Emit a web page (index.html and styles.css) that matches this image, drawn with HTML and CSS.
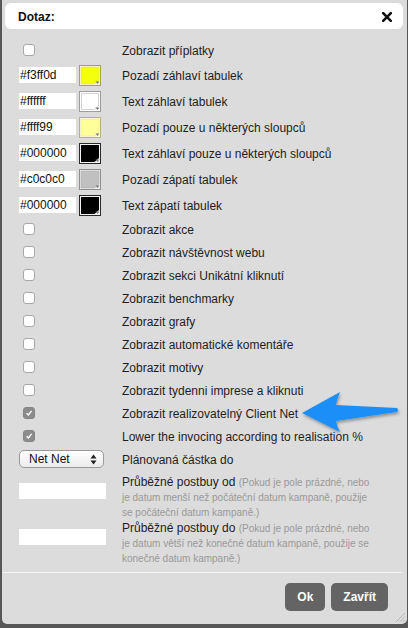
FILE: index.html
```html
<!DOCTYPE html>
<html lang="cs">
<head>
<meta charset="utf-8">
<title>Dotaz</title>
<link rel="stylesheet" href="styles.css">
</head>
<body>
<div class="dialog">
  <div class="header">
    <span class="title">Dotaz:</span>
    <svg class="close" width="10" height="10" viewBox="0 0 10 10"><path d="M1.2 1.2L8.8 8.8M8.8 1.2L1.2 8.8" stroke="#111" stroke-width="2.6" stroke-linecap="square"/></svg>
  </div>
  <div class="content">
    <div class="row chk"><div class="ctl"><span class="cb"></span></div><div class="lbl">Zobrazit příplatky</div></div>

    <div class="row color"><div class="ctl"><span class="hex">#f3ff0d</span>
      <svg class="sw" width="22" height="21" viewBox="0 0 22 21"><rect x="0.5" y="0.5" width="21" height="20" fill="#fbfbe0" stroke="#a9a63a"/><path d="M2 2H20V15L15.5 19H2Z" fill="#f3ff0d" stroke="#dede4a" stroke-width="0.6"/><path d="M16.5 16.5h4l-2 2.5z" fill="#7a7a7a"/></svg>
    </div><div class="lbl">Pozadí záhlaví tabulek</div></div>

    <div class="row color"><div class="ctl"><span class="hex">#ffffff</span>
      <svg class="sw" width="22" height="21" viewBox="0 0 22 21"><rect x="0.5" y="0.5" width="21" height="20" fill="#fff" stroke="#9d9d9d"/><path d="M2.5 2.5H19.5V15L15.5 18.5H2.5Z" fill="#ffffff" stroke="#c8c8c8" stroke-width="0.8"/><path d="M16.5 16.5h4l-2 2.5z" fill="#7a7a7a"/></svg>
    </div><div class="lbl">Text záhlaví tabulek</div></div>

    <div class="row color"><div class="ctl"><span class="hex">#ffff99</span>
      <svg class="sw" width="22" height="21" viewBox="0 0 22 21"><rect x="0.5" y="0.5" width="21" height="20" fill="#fdfde8" stroke="#b7b27a"/><path d="M2 2H20V15L15.5 19H2Z" fill="#ffff99" stroke="#e2df96" stroke-width="0.6"/><path d="M16.5 16.5h4l-2 2.5z" fill="#7a7a7a"/></svg>
    </div><div class="lbl">Pozadí pouze u některých sloupců</div></div>

    <div class="row color"><div class="ctl"><span class="hex">#000000</span>
      <svg class="sw" width="22" height="21" viewBox="0 0 22 21"><rect x="0.5" y="0.5" width="21" height="20" fill="#f4f4f4" stroke="#2a2a2a"/><path d="M2 2H20V15L15.5 19H2Z" fill="#000000"/><path d="M16.5 16.5h4l-2 2.5z" fill="#7a7a7a"/></svg>
    </div><div class="lbl">Text záhlaví pouze u některých sloupců</div></div>

    <div class="row color"><div class="ctl"><span class="hex">#c0c0c0</span>
      <svg class="sw" width="22" height="21" viewBox="0 0 22 21"><rect x="0.5" y="0.5" width="21" height="20" fill="#eeeeee" stroke="#8f8f8f"/><path d="M2 2H20V15L15.5 19H2Z" fill="#c0c0c0" stroke="#b0b0b0" stroke-width="0.6"/><path d="M16.5 16.5h4l-2 2.5z" fill="#7a7a7a"/></svg>
    </div><div class="lbl">Pozadí zápatí tabulek</div></div>

    <div class="row color"><div class="ctl"><span class="hex">#000000</span>
      <svg class="sw" width="22" height="21" viewBox="0 0 22 21"><rect x="0.5" y="0.5" width="21" height="20" fill="#f4f4f4" stroke="#2a2a2a"/><path d="M2 2H20V15L15.5 19H2Z" fill="#000000"/><path d="M16.5 16.5h4l-2 2.5z" fill="#7a7a7a"/></svg>
    </div><div class="lbl">Text zápatí tabulek</div></div>

    <div class="row chk"><div class="ctl"><span class="cb"></span></div><div class="lbl">Zobrazit akce</div></div>
    <div class="row chk"><div class="ctl"><span class="cb"></span></div><div class="lbl">Zobrazit návštěvnost webu</div></div>
    <div class="row chk"><div class="ctl"><span class="cb"></span></div><div class="lbl">Zobrazit sekci Unikátní kliknutí</div></div>
    <div class="row chk"><div class="ctl"><span class="cb"></span></div><div class="lbl">Zobrazit benchmarky</div></div>
    <div class="row chk"><div class="ctl"><span class="cb"></span></div><div class="lbl">Zobrazit grafy</div></div>
    <div class="row chk"><div class="ctl"><span class="cb"></span></div><div class="lbl">Zobrazit automatické komentáře</div></div>
    <div class="row chk"><div class="ctl"><span class="cb"></span></div><div class="lbl">Zobrazit motivy</div></div>
    <div class="row chk"><div class="ctl"><span class="cb"></span></div><div class="lbl">Zobrazit tydenni imprese a kliknuti</div></div>
    <div class="row chk"><div class="ctl"><span class="cb on"><svg width="10" height="10" viewBox="0 0 10 10"><path d="M2.6 5.2L4.3 7L7.6 2.8" fill="none" stroke="#fff" stroke-width="1.3"/></svg></span></div><div class="lbl">Zobrazit realizovatelný Client Net</div></div>
    <div class="row chk"><div class="ctl"><span class="cb on"><svg width="10" height="10" viewBox="0 0 10 10"><path d="M2.6 5.2L4.3 7L7.6 2.8" fill="none" stroke="#fff" stroke-width="1.3"/></svg></span></div><div class="lbl">Lower the invocing according to realisation %</div></div>

    <div class="row chk"><div class="ctl"><div class="sel"><span>Net Net</span><svg width="7" height="11" viewBox="0 0 7 11"><path d="M0.5 4.5L3.5 0.5L6.5 4.5Z M0.5 6.5L3.5 10.5L6.5 6.5Z" fill="#222"/></svg></div></div><div class="lbl">Plánovaná částka do</div></div>

    <div class="row date"><div class="ctl"><span class="field"></span></div><div class="lbl">Průběžné postbuy od <span class="hint">(Pokud je pole prázdné, nebo je datum menší než počáteční datum kampaně, použije se počáteční datum kampaně.)</span></div></div>
    <div class="row date"><div class="ctl"><span class="field"></span></div><div class="lbl">Průběžné postbuy do <span class="hint">(Pokud je pole prázdné, nebo je datum větší než konečné datum kampaně, použije se konečné datum kampaně.)</span></div></div>
  </div>
  <div class="sep"></div>
  <div class="footer">
    <button class="btn">Ok</button>
    <button class="btn">Zavřít</button>
  </div>
  <svg class="arrow" width="108" height="56" viewBox="0 0 108 56">
    <defs><filter id="sh" x="-10%" y="-20%" width="130%" height="150%"><feDropShadow dx="1" dy="2" stdDeviation="1.5" flood-color="#000" flood-opacity="0.35"/></filter></defs>
    <path d="M4 27L42 6Q39 13 38 19L99 22Q101 24 99 26L38 35Q39 41 42 46Z" fill="#1d8ef7" filter="url(#sh)"/>
  </svg>
  <svg class="grip" width="11" height="11" viewBox="0 0 11 11"><path d="M10 1L1 10M10 4.5L4.5 10M10 8L8 10" stroke="#b5b5b5" stroke-width="1"/></svg>
</div>
</body>
</html>
```

FILE: styles.css
```css
html, body {
  margin: 0;
  padding: 0;
}
body {
  background: #575757;
  font-family: "Liberation Sans", Arial, Helvetica, sans-serif;
  font-size: 12px;
  color: #1e1e1e;
  width: 408px;
  height: 628px;
  overflow: hidden;
}
.dialog {
  position: relative;
  margin-left: 2px;
  width: 405px;
  height: 624px;
  background: #dcdcdc;
  border-radius: 0 0 5px 5px;
  display: flex;
  flex-direction: column;
}
.header {
  margin: 3px 4px 0 3px;
  height: 26px;
  background: #fff;
  border-radius: 6px;
  display: flex;
  align-items: center;
  justify-content: space-between;
  padding: 0 11px 0 13px;
}
.title {
  font-weight: bold;
  font-size: 12px;
  color: #111;
  padding-top: 1px;
}
.close {
  display: block;
  margin-top: 1px;
}
.content {
  padding: 10px 0 0 17px;
}
.row {
  display: flex;
  align-items: center;
}
.row.chk { height: 23px; }
.row.color { height: 26px; }
.row.date {
  height: 46px;
  align-items: flex-start;
}
.ctl {
  width: 103px;
  flex: none;
  display: flex;
  align-items: center;
}
.lbl {
  line-height: 15px;
  width: 250px;
  padding-top: 2px;
}
.row.date .lbl { padding-top: 4px; }
.row.date .ctl { padding-top: 12px; }
.cb {
  box-sizing: border-box;
  width: 12px;
  height: 12px;
  margin: 0 0 2px 4px;
  background: #fff;
  border: 1px solid #a8a8a8;
  border-radius: 3px;
  display: flex;
  align-items: center;
  justify-content: center;
}
.cb.on {
  background: #8c8c8c;
  border-color: #858585;
}
.cb svg { display: block; }
.hex {
  box-sizing: border-box;
  width: 57px;
  height: 16px;
  background: #fff;
  line-height: 16px;
  padding-left: 1px;
  color: #111;
  margin-top: -1px;
}
.sw {
  display: block;
  margin-left: 3px;
}
.sel {
  box-sizing: border-box;
  width: 85px;
  height: 18px;
  border: 1px solid #9a9a9a;
  border-radius: 5px;
  background: linear-gradient(#ffffff, #ececec);
  display: flex;
  align-items: center;
  justify-content: space-between;
  padding: 0 6px 0 9px;
  margin-top: -1px;
}
.sel span { line-height: 16px; color: #111; }
.sel svg { display: block; }
.field {
  display: block;
  width: 87px;
  height: 16px;
  background: #fff;
}
.hint {
  font-size: 10px;
  color: #999;
}
.sep {
  margin: 9px 5px 0 1px;
  height: 1px;
  background: #f6f6f6;
}
.footer {
  display: flex;
  justify-content: flex-end;
  gap: 6px;
  padding: 10px 19px 0 0;
}
.btn {
  height: 28px;
  padding: 0 12px;
  border: none;
  border-radius: 5px;
  background: #646464;
  color: #fff;
  font-family: "Liberation Sans", Arial, Helvetica, sans-serif;
  font-size: 12px;
  font-weight: bold;
}
.arrow {
  position: absolute;
  left: 296px;
  top: 386px;
}
.grip {
  position: absolute;
  right: 1px;
  bottom: 1px;
}
```
